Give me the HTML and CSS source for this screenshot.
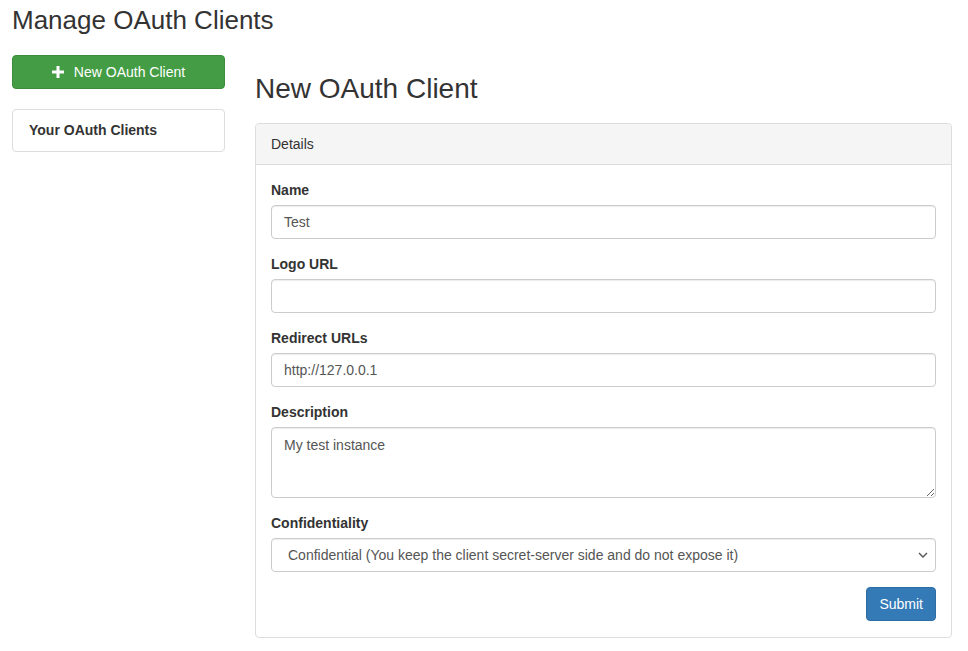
FILE: index.html
```html
<!DOCTYPE html>
<html>
<head>
<meta charset="utf-8">
<link rel="stylesheet" href="styles.css">
</head>
<body>
<div class="page">
  <h1 class="page-title">Manage OAuth Clients</h1>
  <div class="layout">
    <aside class="sidebar">
      <button class="btn btn-success btn-block">
        <svg class="plus" width="12" height="12" viewBox="0 0 12 12"><path d="M4.5 0h3v4.5H12v3H7.5V12h-3V7.5H0v-3h4.5z" fill="#fff"/></svg>
        New OAuth Client
      </button>
      <div class="list-box">Your OAuth Clients</div>
    </aside>
    <main class="main">
      <h2 class="main-title">New OAuth Client</h2>
      <div class="panel">
        <div class="panel-heading">Details</div>
        <div class="panel-body">
          <div class="form-group">
            <label class="lbl">Name</label>
            <input class="form-control" type="text" value="Test">
          </div>
          <div class="form-group">
            <label class="lbl">Logo URL</label>
            <input class="form-control" type="text" value="">
          </div>
          <div class="form-group">
            <label class="lbl">Redirect URLs</label>
            <input class="form-control" type="text" value="http://127.0.0.1">
          </div>
          <div class="form-group">
            <label class="lbl">Description</label>
            <textarea class="form-control textarea">My test instance</textarea>
          </div>
          <div class="form-group">
            <label class="lbl">Confidentiality</label>
            <div class="select-wrap">
              <select class="form-control select">
                <option>Confidential (You keep the client secret-server side and do not expose it)</option>
              </select>
              <svg class="chev" width="10" height="6" viewBox="0 0 10 6"><path d="M1 1l4 4 4-4" fill="none" stroke="#555" stroke-width="1.4"/></svg>
            </div>
          </div>
          <div class="actions">
            <button class="btn btn-primary">Submit</button>
          </div>
        </div>
      </div>
    </main>
  </div>
</div>
</body>
</html>
```

FILE: styles.css
```css
* { box-sizing: border-box; }
html, body { margin: 0; padding: 0; background: #fff; }
body {
  font-family: "Liberation Sans", Arial, sans-serif;
  font-size: 14px;
  line-height: 1.42857;
  color: #333;
}
.page { padding: 0 16px 0 12px; }
.page-title {
  margin: 0;
  padding-top: 6px;
  font-size: 26px;
  font-weight: normal;
  line-height: 28px;
  color: #333;
}
.layout {
  display: flex;
  gap: 30px;
  margin-top: 21px;
}
.sidebar { width: 213px; flex: none; }
.main { flex: 1; }
.btn {
  display: inline-flex;
  align-items: center;
  justify-content: center;
  height: 34px;
  padding: 6px 12px;
  font-family: inherit;
  font-size: 14px;
  border: 1px solid transparent;
  border-radius: 4px;
  color: #fff;
  cursor: pointer;
}
.btn-block { width: 100%; }
.btn-success { background: #449d44; border-color: #3d8b3d; }
.btn-primary { background: #337ab7; border-color: #2e6da4; }
.plus { margin-right: 10px; margin-top: -1px; }
.list-box {
  margin-top: 20px;
  height: 43px;
  border: 1px solid #ddd;
  border-radius: 4px;
  padding: 11px 16px;
  font-weight: bold;
}
.main-title {
  margin: 18px 0 0;
  font-size: 28px;
  font-weight: normal;
  line-height: 32px;
}
.panel {
  margin-top: 18px;
  border: 1px solid #ddd;
  border-radius: 4px;
}
.panel-heading {
  background: #f5f5f5;
  border-bottom: 1px solid #ddd;
  padding: 11px 15px 9px;
  height: 41px;
  border-radius: 3px 3px 0 0;
}
.panel-body { padding: 15px 15px 16px; }
.form-group { margin-bottom: 15px; }
.lbl {
  display: block;
  font-weight: bold;
  margin-bottom: 5px;
  line-height: 20px;
}
.form-control {
  display: block;
  width: 100%;
  height: 34px;
  padding: 6px 12px;
  font-family: inherit;
  font-size: 14px;
  color: #555;
  background: #fff;
  border: 1px solid #ccc;
  border-radius: 4px;
  box-shadow: inset 0 1px 1px rgba(0,0,0,0.075);
  outline: none;
}
.textarea { height: 71px; padding-top: 9px; resize: vertical; }
.select-wrap { position: relative; }
.select {
  -webkit-appearance: none;
  appearance: none;
  padding-left: 16px;
  height: 34px;
}
.chev {
  position: absolute;
  right: 8px;
  top: 14px;
  pointer-events: none;
}
.actions { display: flex; justify-content: flex-end; }
```
